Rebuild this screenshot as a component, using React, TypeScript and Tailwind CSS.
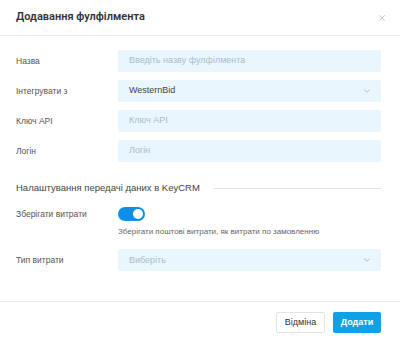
import { ChevronDown, X } from "lucide-react";

const font = { fontFamily: '"Liberation Sans", Arial, sans-serif' };

function Row({ label, children }: { label: string; children: React.ReactNode }) {
  return (
    <div className="flex items-start">
      <div className="w-[102px] shrink-0 pt-[5px] text-[8.5px] text-[#555]">{label}</div>
      <div className="flex-1">{children}</div>
    </div>
  );
}

function Input({ placeholder, value }: { placeholder?: string; value?: string }) {
  return (
    <div className="h-[22px] rounded-[2px] bg-[#eaf6fd] px-[11px] flex items-center text-[9px]">
      {value ? (
        <span className="text-[#444]">{value}</span>
      ) : (
        <span className="text-[#a9bccb]">{placeholder}</span>
      )}
    </div>
  );
}

function Select({ placeholder, value }: { placeholder?: string; value?: string }) {
  return (
    <div className="h-[22px] rounded-[2px] bg-[#eaf6fd] pl-[11px] pr-[9px] flex items-center justify-between text-[9px]">
      {value ? (
        <span className="text-[#444]">{value}</span>
      ) : (
        <span className="text-[#a9bccb]">{placeholder}</span>
      )}
      <ChevronDown className="h-[10px] w-[10px] text-[#999]" strokeWidth={1.5} />
    </div>
  );
}

export default function App() {
  return (
    <div className="w-[400px] h-[341px] bg-white flex flex-col" style={font}>
      <div className="h-[36px] shrink-0 border-b border-[#ececec] flex items-center justify-between pl-4 pr-[13px]">
        <h3 className="text-[11px] font-semibold text-[#333]" style={{ fontFamily: 'Roboto, "Liberation Sans", sans-serif' }}>
          Додавання фулфілмента
        </h3>
        <X className="h-[10px] w-[10px] text-[#aaa]" strokeWidth={1.5} />
      </div>

      <div className="flex-1 pl-4 pr-[19px] pt-[14px]">
        <div className="flex flex-col gap-[8px]">
          <Row label="Назва">
            <Input placeholder="Введіть назву фулфілмента" />
          </Row>
          <Row label="Інтегрувати з">
            <Select value="WesternBid" />
          </Row>
          <Row label="Ключ API">
            <Input placeholder="Ключ API" />
          </Row>
          <Row label="Логін">
            <Input placeholder="Логін" />
          </Row>
        </div>

        <div className="flex items-center gap-[14px] mt-[19px]">
          <span className="text-[9.5px] text-[#444]">Налаштування передачі даних в KeyCRM</span>
          <div className="flex-1 border-t border-[#e3e3e3]" />
        </div>

        <div className="flex items-start mt-[12px]">
          <div className="w-[102px] shrink-0 pt-[1px] text-[8.5px] text-[#555]">Зберігати витрати</div>
          <div className="flex-1">
            <div className="w-[27px] h-[14px] rounded-full bg-[#0f8ee8] flex items-center justify-end px-[2px]">
              <div className="w-[10px] h-[10px] rounded-full bg-white" />
            </div>
            <div className="mt-[5px] text-[8px] text-[#666]">
              Зберігати поштові витрати, як витрати по замовленню
            </div>
          </div>
        </div>

        <div className="mt-[11px]">
          <Row label="Тип витрати">
            <Select placeholder="Виберіть" />
          </Row>
        </div>
      </div>

      <div className="h-[40px] shrink-0 border-t border-[#ececec] flex items-start justify-end gap-[8px] pt-[10px] pr-[19px]">
        <button className="h-[21px] w-[49px] rounded-[2px] border border-[#e3e3e3] bg-white text-[9px] text-[#333]">
          Відміна
        </button>
        <button className="h-[21px] w-[48px] rounded-[2px] bg-[#0ea1e6] text-[9px] font-bold text-white">
          Додати
        </button>
      </div>
    </div>
  );
}
